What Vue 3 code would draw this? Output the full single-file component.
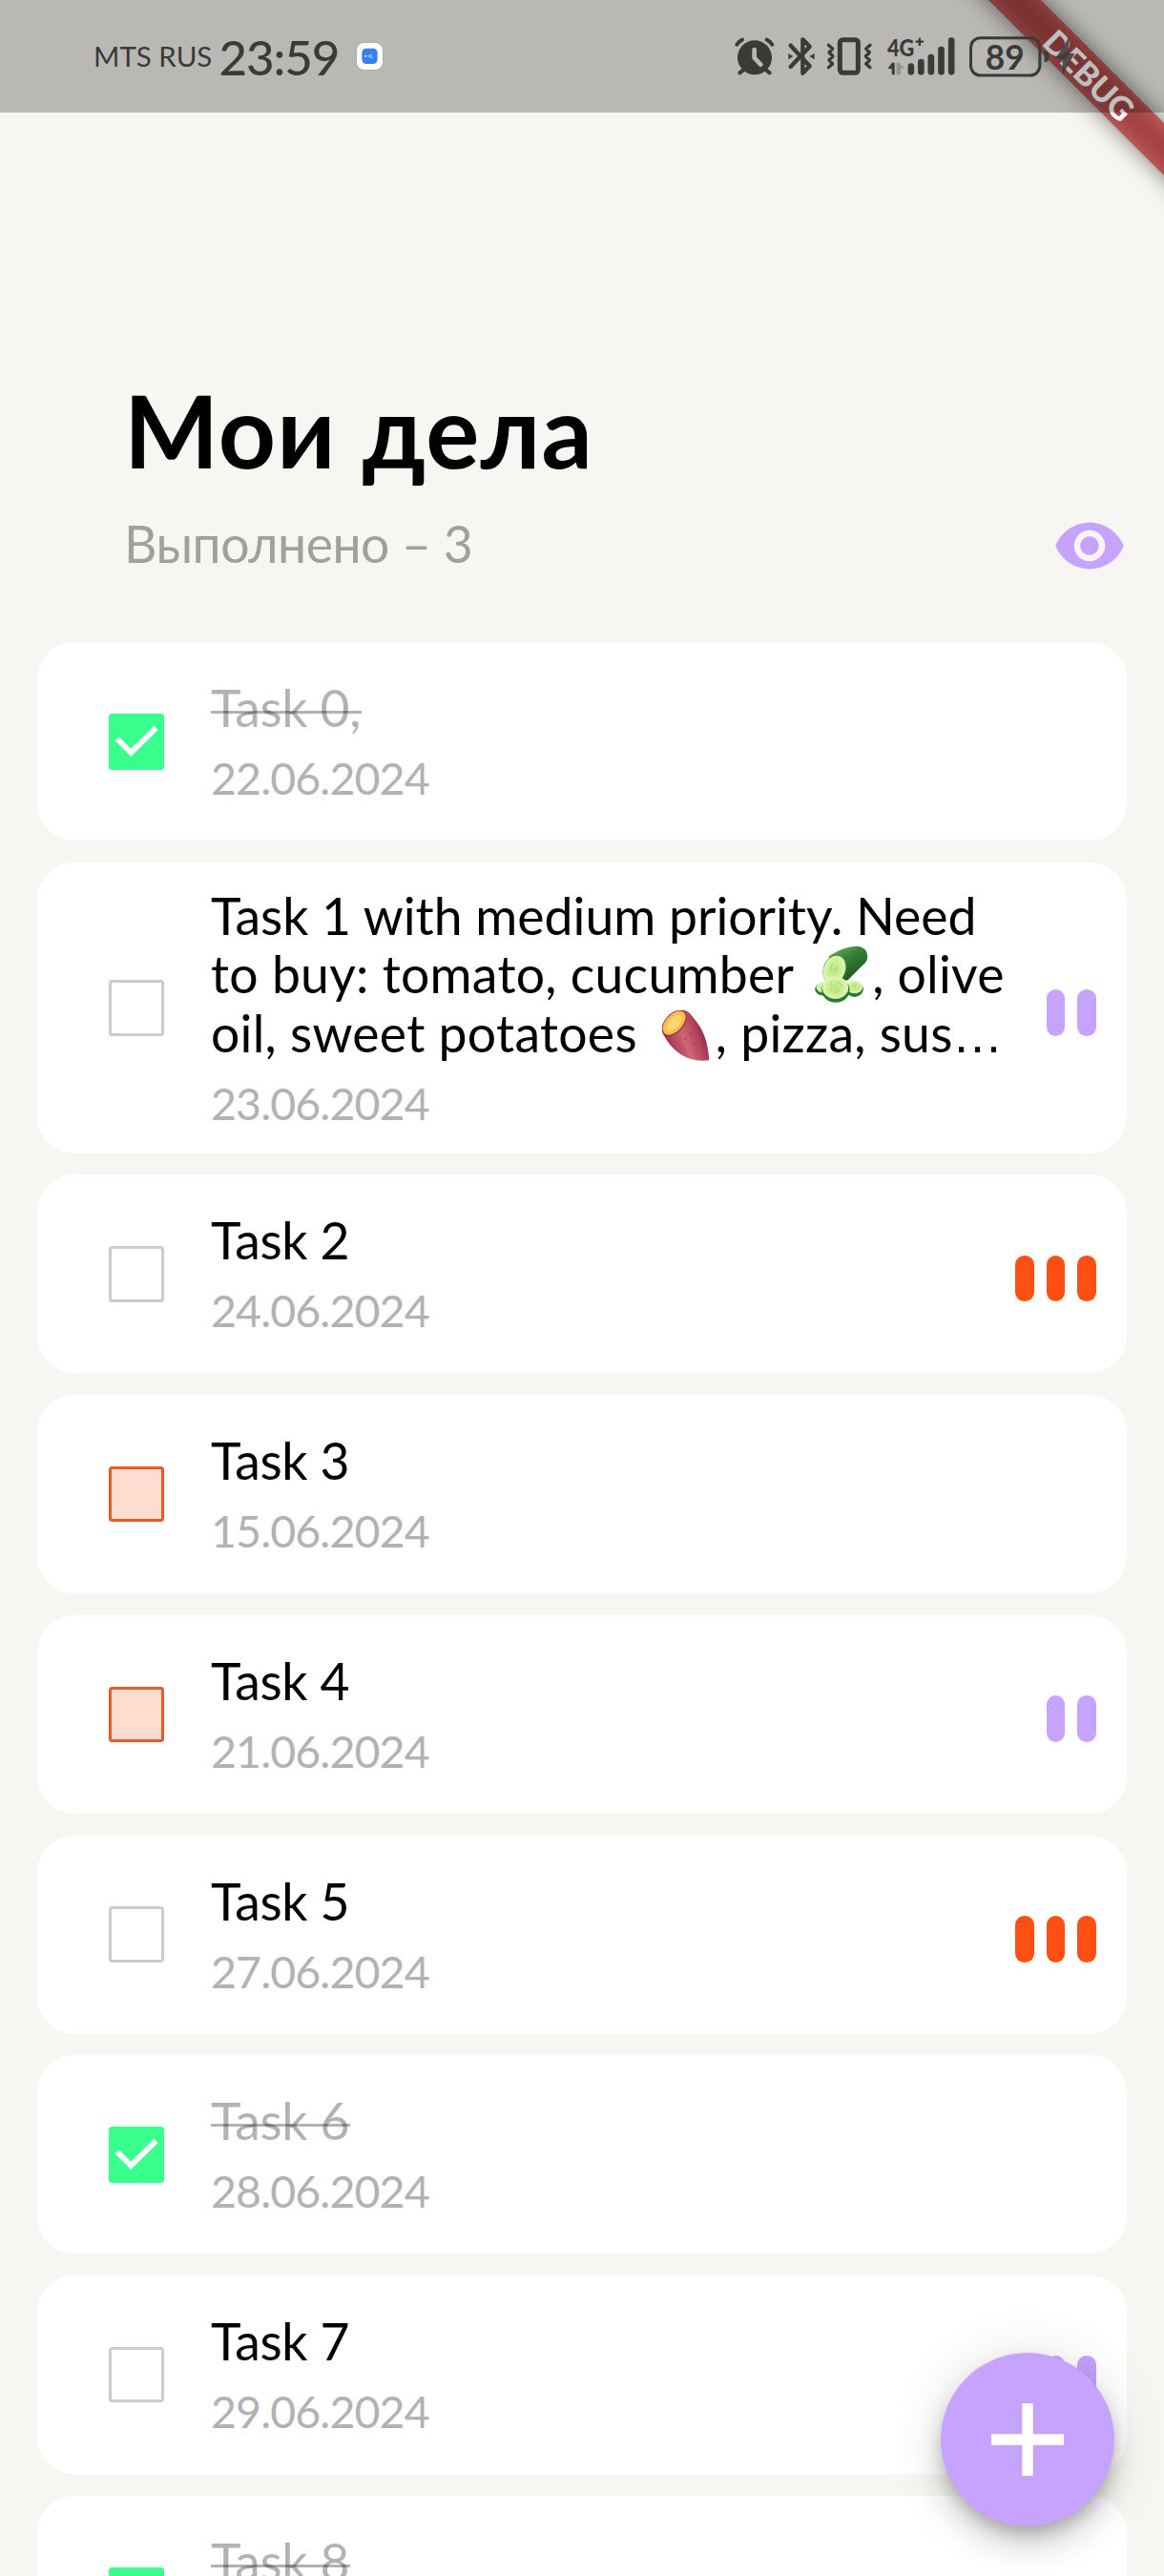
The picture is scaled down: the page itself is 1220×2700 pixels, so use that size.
<script setup>
const tasks = [
  { lines: [['Task 0,']], date: '22.06.2024', state: 'done', bars: 0 },
  {
    lines: [
      ['Task 1 with medium priority. Need'],
      ['to buy: tomato, cucumber ', 'cucumber', ', olive'],
      ['oil, sweet potatoes ', 'potato', ', pizza, sus', '…']
    ],
    date: '23.06.2024', state: 'open', bars: 2
  },
  { lines: [['Task 2']], date: '24.06.2024', state: 'open', bars: 3 },
  { lines: [['Task 3']], date: '15.06.2024', state: 'late', bars: 0 },
  { lines: [['Task 4']], date: '21.06.2024', state: 'late', bars: 2 },
  { lines: [['Task 5']], date: '27.06.2024', state: 'open', bars: 3 },
  { lines: [['Task 6']], date: '28.06.2024', state: 'done', bars: 0 },
  { lines: [['Task 7']], date: '29.06.2024', state: 'open', bars: 2 },
  { lines: [['Task 8']], date: '30.06.2024', state: 'done', bars: 0 }
]
</script>

<template>
  <div class="screen">
    <div class="banner"><span class="banner-text">DEBUG</span></div>

    <header class="status">
      <span class="carrier">MTS RUS</span>
      <span class="clock">23:59</span>
      <svg class="app-icon" viewBox="0 0 87 90">
        <rect x="1.5" y="1.5" width="84" height="87" rx="25" fill="#fff" stroke="#8fa08f" stroke-width="2" />
        <rect x="19" y="20" width="49" height="49" rx="14" fill="#3c80ee" />
        <path d="M36 44.500h5q5-6 10-4M42 44.500q5 7 12 3" fill="none" stroke="#dce9ff" stroke-width="2.600" />
        <rect x="28" y="42" width="5" height="5" fill="#fff" />
      </svg>
      <div class="icons">
        <svg class="ic alarm" viewBox="86 114 130 126">
          <circle cx="152" cy="181" r="54" />
          <path class="ln" d="M96 140Q102 130 113 125M207 140Q201 130 190 125M120 217L105 229M184 217L199 229" stroke-width="12" />
          <path class="cut" d="M151 156V182L171 203" stroke-width="14" />
        </svg>
        <svg class="ic bt" viewBox="254 114 90 126">
          <path class="ln" d="M265 143L325 208L303 230V124L325 146L265 210" stroke-width="13" />
          <path d="M258 168l15 9-15 10zM340 168l-16 9 16 10z" />
        </svg>
        <svg class="ic vibe" viewBox="376 114 150 126">
          <rect x="422" y="125" width="57" height="104" rx="9" fill="none" stroke="#3a3a38" stroke-width="15" />
          <path class="ln" d="M386 142L399 153L388 165L400 177L388 189L399 201L386 212M517 142L504 153L515 165L503 177L515 189L504 201L517 212" stroke-width="10" />
        </svg>
        <svg class="ic signal" viewBox="566 114 218 126">
          <text x="569" y="176" font-size="76" font-weight="900" textLength="85" lengthAdjust="spacingAndGlyphs">4G</text>
          <path d="M658 131h25M670.500 119v25" fill="none" stroke="#3a3a38" stroke-width="7" />
          <path d="M570 216L584 197H592V235H583V216Z" />
          <path d="M598 197H605L622 215H611V235H598Z" fill="#92928e" />
          <path class="ln" d="M643.500 209V226M675 195V226M706.500 180V226M738.500 156V226M770.500 128V226" stroke-width="20" />
        </svg>
        <svg class="ic battery" viewBox="824 110 260 134">
          <rect x="831.500" y="118" width="217" height="118" rx="30" fill="none" stroke="#3a3a38" stroke-width="9" />
          <text x="877" y="218" font-size="110" font-weight="700" textLength="123" lengthAdjust="spacingAndGlyphs">89</text>
          <path d="M1063 159Q1078 160 1078 177Q1078 194 1063 195Z" />
        </svg>
        <svg class="ic bolt" viewBox="1096 114 64 126">
          <path d="M1142 118L1100 184H1122V236L1160 168H1140Z" />
        </svg>
      </div>
    </header>

    <section class="heading">
      <h1>Мои дела</h1>
      <div class="sub">
        <span class="count">Выполнено – 3</span>
        <svg class="eye" viewBox="0 0 24 24">
          <path d="M12 4.500C7 4.500 2.730 7.610 1 12c1.730 4.390 6 7.500 11 7.500s9.270-3.110 11-7.500c-1.730-4.390-6-7.500-11-7.500zM12 17c-2.760 0-5-2.240-5-5s2.240-5 5-5 5 2.240 5 5-2.240 5-5 5zm0-8c-1.660 0-3 1.340-3 3s1.340 3 3 3 3-1.340 3-3-1.340-3-3-3z" fill="#c6a3ff" />
        </svg>
      </div>
    </section>

    <main class="list">
      <article v-for="task in tasks" :key="task.date" class="card">
        <span class="box" :class="task.state">
          <svg v-if="task.state === 'done'" class="tick" viewBox="0 0 176 176">
            <path d="M26 79L70 123L149 45" fill="none" stroke="#fff" stroke-width="18" />
          </svg>
        </span>
        <div class="body">
          <p v-for="(line, i) in task.lines" :key="i" class="line" :class="{ wide: task.lines.length > 1, wider: i > 0 }">
            <span class="title" :class="{ struck: task.state === 'done' }"><template v-for="part in line" :key="part"><svg v-if="part === 'cucumber'" class="emoji cuke" viewBox="0 0 156 168">
              <defs>
                <linearGradient id="skin" x1="0.200" y1="0.100" x2="0.800" y2="0.900">
                  <stop offset="0" stop-color="#6fa653" /><stop offset="0.400" stop-color="#347f35" /><stop offset="1" stop-color="#1d5423" />
                </linearGradient>
                <radialGradient id="flesh"><stop offset="0" stop-color="#b9e67c" /><stop offset="0.650" stop-color="#cdf099" /><stop offset="1" stop-color="#e2f8b8" /></radialGradient>
              </defs>
              <path d="M42 30Q88 2 122 2Q154 4 154 34Q153 48 142 56L96 102L30 104Z" fill="url(#skin)" />
              <ellipse cx="58" cy="70" rx="33" ry="44" transform="rotate(22 58 70)" fill="#4d963e" />
              <ellipse cx="57" cy="71" rx="31" ry="42" transform="rotate(22 57 71)" fill="url(#flesh)" />
              <ellipse cx="24" cy="128" rx="24" ry="19" fill="#2c7a31" /><ellipse cx="27" cy="123" rx="23" ry="16" fill="url(#flesh)" />
              <ellipse cx="116" cy="128" rx="26" ry="23" fill="#2c7a31" /><ellipse cx="116" cy="122" rx="24" ry="19" fill="url(#flesh)" />
              <ellipse cx="61" cy="131" rx="41" ry="36" fill="#2c7a31" /><ellipse cx="60" cy="124" rx="38" ry="33" fill="url(#flesh)" />
              <path d="M48 118q-6-8 2-14M66 108q12 2 12 12M72 130q-6 9-16 7M46 126l3 6M54 54q-10 8-8 22M64 60q4 12-6 22" fill="none" stroke="#a4d970" stroke-width="3" />
            </svg><svg v-else-if="part === 'potato'" class="emoji spud" viewBox="0 0 130 142">
              <defs>
                <linearGradient id="peel" x1="0" y1="0.700" x2="1" y2="0.300">
                  <stop offset="0" stop-color="#8f2443" /><stop offset="0.450" stop-color="#cd6678" /><stop offset="0.700" stop-color="#b3445c" /><stop offset="1" stop-color="#751a34" />
                </linearGradient>
              </defs>
              <path d="M2 66Q10 24 56 1Q72 2 88 26Q124 66 128 138Q84 144 50 122Q22 104 2 66Z" fill="url(#peel)" />
              <ellipse cx="33" cy="37" rx="26" ry="42" transform="rotate(42 33 37)" fill="#9b3142" />
              <ellipse cx="33" cy="36" rx="23" ry="39" transform="rotate(42 33 36)" fill="#f7be4b" />
              <ellipse cx="33" cy="37" rx="14" ry="26" transform="rotate(42 33 37)" fill="#ffd36e" />
              <path d="M60 78l6 3M84 92l5 4M76 62l4 3M90 118l6 1" stroke="#a03a52" stroke-width="3" />
            </svg><span v-else-if="part === '…'" class="dots">{{ part }}</span><template v-else>{{ part }}</template></template></span>
          </p>
          <p class="date">{{ task.date }}</p>
        </div>
        <div class="bars" :class="{ high: task.bars === 3 }">
          <i v-for="n in task.bars" :key="n" class="bar"></i>
        </div>
      </article>
    </main>

    <button class="fab" type="button">
      <svg class="plus" viewBox="0 0 76 76"><path d="M0 38H76M38 0V76" stroke="#fff" stroke-width="11.400" /></svg>
    </button>
  </div>
</template>

<style>
html, body { margin: 0; background: #f7f6f2; }
</style>

<style scoped>
.screen {
  position: relative;
  width: 1220px;
  height: 2700px;
  overflow: hidden;
  background: #f7f6f2;
  font-family: Lato, "Open Sans", sans-serif;
}
p, h1 { margin: 0; }

/* diagonal ribbon across the top right corner */
.banner {
  position: absolute;
  left: 942px;
  top: 58.500px;
  width: 400px;
  height: 39px;
  display: flex;
  align-items: center;
  justify-content: center;
  transform: rotate(45deg);
}
.banner::before {
  content: "";
  position: absolute;
  inset: 0;
  background: rgba(0, 0, 0, 0.500);
  filter: blur(12px);
}
.banner::after {
  content: "";
  position: absolute;
  inset: 0;
  background: rgba(183, 28, 28, 0.627);
}
.banner-text {
  position: relative;
  z-index: 1;
  color: #fff;
  font-size: 34px;
  font-weight: 900;
  line-height: 39px;
}

.status {
  position: relative;
  display: flex;
  align-items: center;
  box-sizing: border-box;
  height: 118px;
  padding: 0 93.300px 0 98px;
  background: rgba(0, 0, 0, 0.250);
  color: #3a3a38;
}
.carrier { font-size: 29.500px; line-height: 36px; width: 131.500px; white-space: nowrap; }
.clock { font-size: 51px; font-weight: 500; line-height: 62px; letter-spacing: -1.100px; width: 143.500px; margin-top: 1px; white-space: nowrap; }
.app-icon { width: 29px; height: 30px; }
.icons { display: flex; align-items: center; margin-left: auto; }
.ic { display: block; height: 42px; fill: #3a3a38; overflow: visible; }
.ln { fill: none; stroke: #3a3a38; stroke-linecap: round; stroke-linejoin: round; }
.cut { fill: none; stroke: #b9b8b5; stroke-linecap: round; stroke-linejoin: round; }
.alarm { width: 43.300px; }
.bt { width: 30px; margin-left: 12.700px; }
.vibe { width: 50px; margin-left: 10.700px; }
.signal { width: 72.700px; margin-left: 13.300px; }
.battery { width: 86.700px; height: 44.700px; margin-left: 13.300px; }
.bolt { width: 21.300px; margin-left: 4px; opacity: 0.850; }

.heading { padding: 269.400px 39px 0 130px; }
h1 { font-size: 105px; line-height: 126px; font-weight: 700; letter-spacing: 1.200px; color: #000; }
.sub { display: flex; justify-content: space-between; align-items: center; height: 64px; margin-top: 24px; }
.count { font-size: 53.500px; line-height: 64px; letter-spacing: -0.500px; color: #a0a09e; }
.eye { width: 78px; height: 78px; margin-top: 5px; }

.list { display: flex; flex-direction: column; gap: 22.750px; padding: 72px 39px 0; }
.card {
  display: flex;
  align-items: center;
  box-sizing: border-box;
  min-height: 208px;
  padding: 0 32.500px 0 74.750px;
  border-radius: 39px;
  background: #fff;
}
.box { flex: none; box-sizing: border-box; width: 58.500px; height: 58.500px; border-radius: 3.500px; }
.open { border: 3.250px solid #cccccc; }
.late { border: 3.250px solid #ee5824; background: #ffdbd0; }
.done { background: #39ff8d; }
.tick { display: block; width: 58.500px; height: 58.500px; }
.body { flex: 1; min-width: 0; margin-left: 48.750px; padding: 24.700px 0 24.700px; }
.line { height: 61.500px; line-height: 61.500px; font-size: 53.500px; letter-spacing: -0.300px; color: #000; white-space: pre; }
.wide { letter-spacing: 0; }
.wider { letter-spacing: 0.270px; }
.title { position: relative; display: inline-block; height: 61.500px; }
.struck { color: rgba(0, 0, 0, 0.300); }
.struck::after {
  content: "";
  position: absolute;
  left: 0;
  right: -1px;
  top: 34px;
  height: 3px;
  background: rgba(0, 0, 0, 0.300);
}
.dots { font-family: "Liberation Sans", sans-serif; line-height: 1; margin-left: -1px; }
.date { margin-top: 15.600px; font-size: 46.500px; line-height: 55px; letter-spacing: -0.900px; color: #b2b2b2; }
.emoji { vertical-align: -10px; }
.cuke { width: 60px; height: 60px; margin: 0 2px 0 7px; }
.spud { width: 50px; height: 55px; margin: 0 6px 0 12px; }
.bars { display: flex; gap: 13px; margin-top: 9.500px; }
.bar { width: 19.500px; height: 48.750px; border-radius: 9.750px; background: #c6a3ff; }
.high .bar { background: #fe5012; }

.fab {
  position: absolute;
  left: 986px;
  top: 2466px;
  width: 182px;
  height: 182px;
  display: flex;
  align-items: center;
  justify-content: center;
  padding: 0;
  border: 0;
  border-radius: 50%;
  background: #c6a3ff;
  box-shadow: 0 9.750px 16px -3px rgba(0, 0, 0, 0.200), 0 19.500px 32px rgba(0, 0, 0, 0.140), 0 3px 58px rgba(0, 0, 0, 0.120);
}
.plus { width: 76px; height: 76px; }
</style>
